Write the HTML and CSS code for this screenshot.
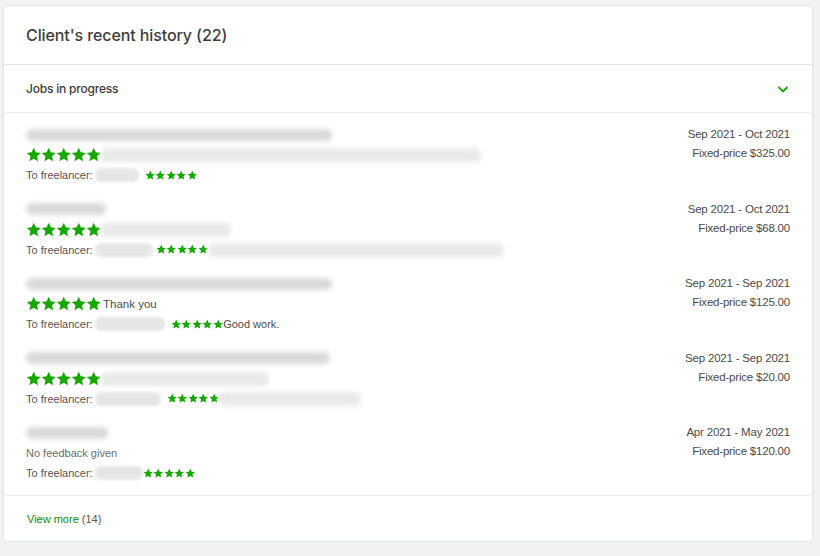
FILE: index.html
```html
<!DOCTYPE html>
<html lang="en">
<head>
    <meta charset="UTF-8">
    <title>Client history</title>
    <link rel="stylesheet" href="styles.css">
</head>
<body>
<svg width="0" height="0" class="defs">
    <symbol id="star" viewBox="0 0 24 24">
        <path d="M12 1.2l3.2 7.1 7.6.8-5.7 5.2 1.6 7.6L12 18l-6.7 3.9 1.6-7.6L1.2 9.1l7.6-.8z"/>
    </symbol>
</svg>
<div class="card">
    <div class="card-head">
        <h2>Client's recent history (22)</h2>
    </div>
    <div class="toggle">
        <span>Jobs in progress</span>
        <svg class="chevron" viewBox="0 0 14 14"><path d="M2.5 5l4.5 4.5L11.5 5" fill="none" stroke="currentColor" stroke-width="1.8"/></svg>
    </div>
    <ul class="history">
        <li class="job">
            <div class="job-main">
                <div class="line title"><span class="blur" style="width:306px"></span></div>
                <div class="line">
                    <span class="stars big"><svg><use href="#star"/></svg><svg><use href="#star"/></svg><svg><use href="#star"/></svg><svg><use href="#star"/></svg><svg><use href="#star"/></svg></span>
                    <span class="blur light" style="width:380px"></span>
                </div>
                <div class="line small">
                    <span>To freelancer:</span>
                    <span class="blur name" style="width:44px"></span>
                    <span class="stars sm gap"><svg><use href="#star"/></svg><svg><use href="#star"/></svg><svg><use href="#star"/></svg><svg><use href="#star"/></svg><svg><use href="#star"/></svg></span>
                </div>
            </div>
            <div class="job-meta">
                <div>Sep 2021 - Oct 2021</div>
                <div>Fixed-price $325.00</div>
            </div>
        </li>
        <li class="job">
            <div class="job-main">
                <div class="line title"><span class="blur" style="width:80px"></span></div>
                <div class="line">
                    <span class="stars big"><svg><use href="#star"/></svg><svg><use href="#star"/></svg><svg><use href="#star"/></svg><svg><use href="#star"/></svg><svg><use href="#star"/></svg></span>
                    <span class="blur light" style="width:130px"></span>
                </div>
                <div class="line small">
                    <span>To freelancer:</span>
                    <span class="blur name" style="width:58px"></span>
                    <span class="stars sm near"><svg><use href="#star"/></svg><svg><use href="#star"/></svg><svg><use href="#star"/></svg><svg><use href="#star"/></svg><svg><use href="#star"/></svg></span>
                    <span class="blur light" style="width:296px"></span>
                </div>
            </div>
            <div class="job-meta">
                <div>Sep 2021 - Oct 2021</div>
                <div>Fixed-price $68.00</div>
            </div>
        </li>
        <li class="job">
            <div class="job-main">
                <div class="line title"><span class="blur" style="width:306px"></span></div>
                <div class="line">
                    <span class="stars big"><svg><use href="#star"/></svg><svg><use href="#star"/></svg><svg><use href="#star"/></svg><svg><use href="#star"/></svg><svg><use href="#star"/></svg></span>
                    <span class="comment">Thank you</span>
                </div>
                <div class="line small">
                    <span>To freelancer:</span>
                    <span class="blur name" style="width:70px"></span>
                    <span class="stars sm gap"><svg><use href="#star"/></svg><svg><use href="#star"/></svg><svg><use href="#star"/></svg><svg><use href="#star"/></svg><svg><use href="#star"/></svg></span>
                    <span class="comment tight">Good work.</span>
                </div>
            </div>
            <div class="job-meta">
                <div>Sep 2021 - Sep 2021</div>
                <div>Fixed-price $125.00</div>
            </div>
        </li>
        <li class="job">
            <div class="job-main">
                <div class="line title"><span class="blur" style="width:304px"></span></div>
                <div class="line">
                    <span class="stars big"><svg><use href="#star"/></svg><svg><use href="#star"/></svg><svg><use href="#star"/></svg><svg><use href="#star"/></svg><svg><use href="#star"/></svg></span>
                    <span class="blur light" style="width:168px"></span>
                </div>
                <div class="line small">
                    <span>To freelancer:</span>
                    <span class="blur name" style="width:66px"></span>
                    <span class="stars sm gap"><svg><use href="#star"/></svg><svg><use href="#star"/></svg><svg><use href="#star"/></svg><svg><use href="#star"/></svg><svg><use href="#star"/></svg></span>
                    <span class="blur light" style="width:142px"></span>
                </div>
            </div>
            <div class="job-meta">
                <div>Sep 2021 - Sep 2021</div>
                <div>Fixed-price $20.00</div>
            </div>
        </li>
        <li class="job">
            <div class="job-main">
                <div class="line title"><span class="blur" style="width:82px"></span></div>
                <div class="line small muted">No feedback given</div>
                <div class="line small">
                    <span>To freelancer:</span>
                    <span class="blur name" style="width:48px"></span>
                    <span class="stars sm"><svg><use href="#star"/></svg><svg><use href="#star"/></svg><svg><use href="#star"/></svg><svg><use href="#star"/></svg><svg><use href="#star"/></svg></span>
                </div>
            </div>
            <div class="job-meta">
                <div>Apr 2021 - May 2021</div>
                <div>Fixed-price $120.00</div>
            </div>
        </li>
    </ul>
    <div class="card-foot">
        <a href="#">View more</a> <span>(14)</span>
    </div>
</div>
</body>
</html>
```

FILE: styles.css
```css
*{
    padding: 0;
    margin: 0;
    box-sizing: border-box;
}
ul{
    list-style-type: none;
}
body{
    background-color: #f1f2f2;
    font-family: "Liberation Sans", Arial, sans-serif;
    color: #222222;
    padding: 5px 7px 0 3px;
}
.defs{
    position: absolute;
}
.card{
    background-color: #ffffff;
    border: 1px solid #e4e5e5;
    border-radius: 5px;
    height: 537px;
}
.card-head{
    height: 59px;
    padding: 0 22px;
    display: flex;
    align-items: center;
    border-bottom: 1px solid #e4e5e5;
}
.card-head h2{
    font-size: 16px;
    color: #3d3d3d;
    font-family: Inter, "Liberation Sans", sans-serif;
    font-weight: 500;
    letter-spacing: -0.1px;
}
.toggle{
    height: 48px;
    padding: 0 22px 0 22px;
    display: flex;
    align-items: center;
    justify-content: space-between;
    border-bottom: 1px solid #ececec;
    font-size: 12px;
    font-weight: 500;
    font-family: Inter, "Liberation Sans", sans-serif;
    letter-spacing: -0.2px;
    color: #3a3a3a;
}
.chevron{
    width: 14px;
    height: 14px;
    color: #14a800;
}
.history{
    padding: 11px 22px 13px 22px;
    border-bottom: 1px solid #ececec;
}
.job{
    display: flex;
    justify-content: space-between;
    height: 74.5px;
}
.job:last-child{
    height: 60px;
}
.job-main{
    flex: 1;
}
.line{
    display: flex;
    align-items: center;
    height: 20px;
    font-size: 11.5px;
    color: #4a4a4a;
}
.line.title{
    height: 21px;
}
.line.small{
    font-size: 11px;
    color: #555555;
}
.line.muted{
    color: #6b6b6b;
}
.blur{
    display: inline-block;
    height: 12px;
    border-radius: 6px;
    background-color: #d9d9d9;
    filter: blur(2.5px);
}
.blur.light{
    height: 14px;
    background-color: #e9e9e9;
}
.blur.name{
    height: 14px;
    margin-left: 2px;
    background-color: #e6e6e6;
    filter: blur(1.5px);
}
.stars{
    display: inline-flex;
}
.stars svg{
    fill: #14a800;
}
.stars.big svg{
    width: 15.5px;
    height: 15.5px;
    margin-right: -0.5px;
}
.stars.sm{
    margin-left: 0;
}
.stars.sm.near{
    margin-left: 3px;
}
.stars.sm.gap{
    margin-left: 6px;
}
.stars.sm svg{
    width: 10.5px;
    height: 10.5px;
}
.comment{
    margin-left: 2px;
    color: #4d4d4d;
}
.comment.tight{
    margin-left: 0;
}
.job-meta{
    text-align: right;
    font-size: 11.5px;
    letter-spacing: -0.2px;
    color: #4a4a4a;
    line-height: 19px;
    padding-top: 1px;
}
.card-foot{
    height: 45px;
    padding: 0 23px;
    display: flex;
    align-items: center;
    gap: 3px;
    font-size: 11px;
    color: #555555;
}
.card-foot a{
    color: #108a00;
    text-decoration: none;
}
```
